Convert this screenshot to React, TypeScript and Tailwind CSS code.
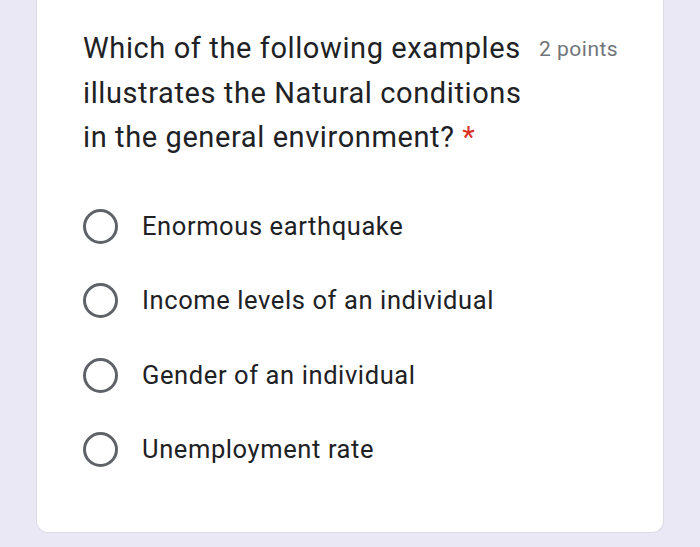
export default function App() {
  const options = [
    "Enormous earthquake",
    "Income levels of an individual",
    "Gender of an individual",
    "Unemployment rate",
  ];

  return (
    <div className="h-[547px] w-[700px] overflow-hidden bg-[#ebe8f6] px-[36px] font-['Roboto',sans-serif]">
      <div className="h-[533px] rounded-b-[12px] border-x border-b border-[#dcdae3] bg-white pl-[46px] pr-[20px] pt-[26px]">
        {/* Question header */}
        <div className="flex items-start gap-[10px]">
          <div className="w-[446px] text-[29px] leading-[44.5px] tracking-[0.6px] text-[#202124]">
            Which of the following examples illustrates the Natural conditions in the general environment?{" "}
            <span className="text-[#d93025]">*</span>
          </div>
          <div className="pt-[8px] text-[21px] leading-[30px] tracking-[0.5px] text-[#70757a] whitespace-nowrap">2 points</div>
        </div>

        {/* Options */}
        <div className="mt-[49px] flex flex-col gap-[39.5px]">
          {options.map((opt) => (
            <div key={opt} className="flex items-center gap-[24px]">
              <div className="h-[35px] w-[35px] shrink-0 rounded-full border-[3px] border-[#5f6368]" />
              <span className="text-[25.5px] leading-[35px] tracking-[0.6px] text-[#202124]">{opt}</span>
            </div>
          ))}
        </div>
      </div>
    </div>
  );
}
